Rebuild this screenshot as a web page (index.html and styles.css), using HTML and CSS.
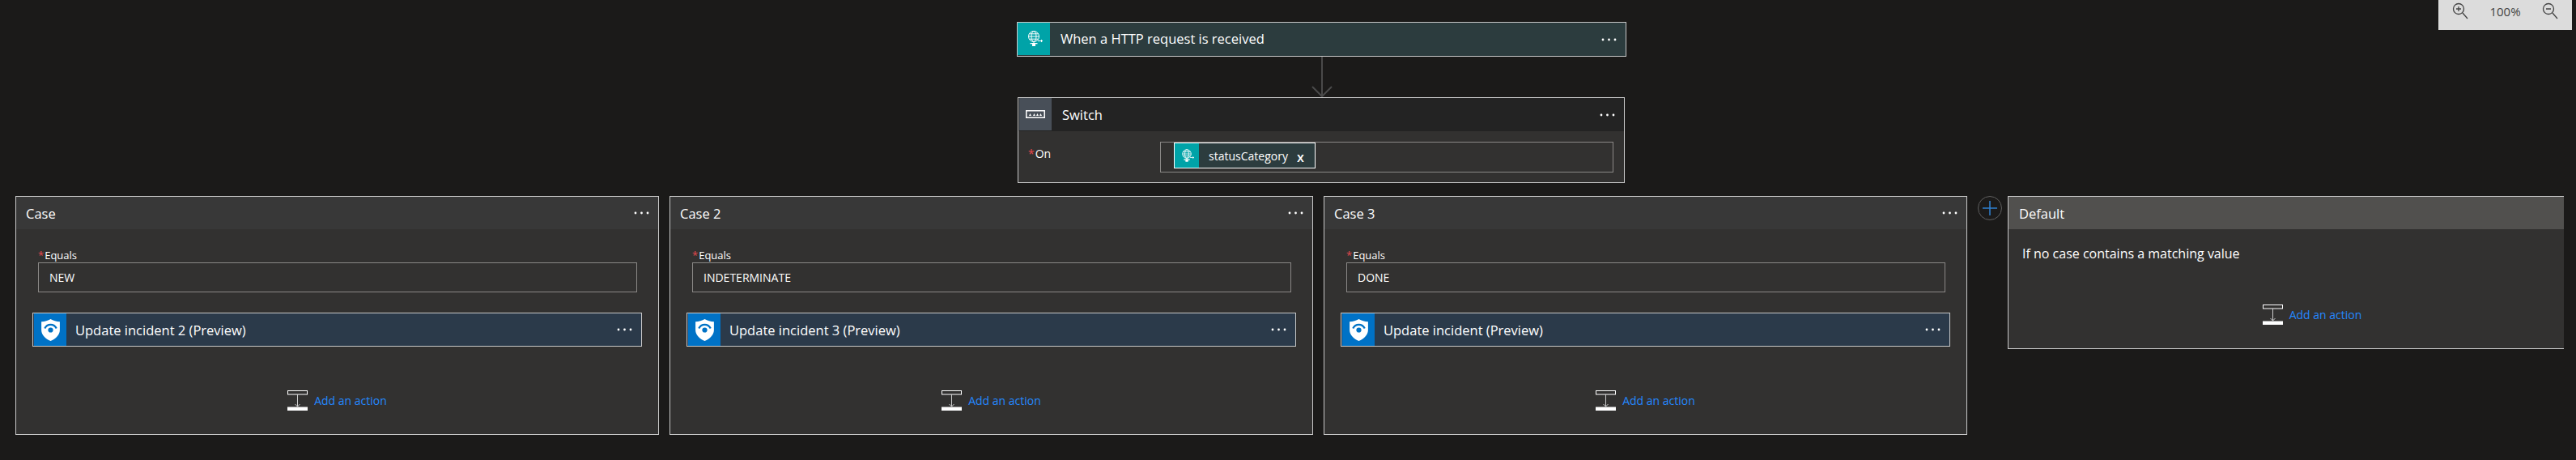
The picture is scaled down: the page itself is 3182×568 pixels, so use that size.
FILE: index.html
```html
<!DOCTYPE html>
<html lang="en">
  <head>
    <meta charset="UTF-8" />
    <title>Logic App Designer</title>
    <link rel="stylesheet" href="styles.css">
  </head>
  <body>
    <svg class="defs" width="0" height="0">
      <symbol id="globe" viewBox="0 0 22 20">
        <g fill="none" stroke="#fff" stroke-width="1">
          <circle cx="11" cy="7" r="6.500" />
          <ellipse cx="11" cy="7" rx="3" ry="6.500" />
          <path d="M4.500 7h13M5.500 3.800h11M5.500 10.200h11M11 13.500v2" />
        </g>
        <path d="M6.500 15h9v1.300h-9zM9 16.300h4V19H9z" fill="#fff" />
        <path d="M16 12.500h5.500M20 11l1.700 1.500-1.700 1.500" fill="none" stroke="#fff" stroke-width="1" />
      </symbol>
      <symbol id="shield" viewBox="0 0 24 28">
        <path d="M12 1 C15 3 19 4 23 4 V14 C23 20 18 24.500 12 27 C6 24.500 1 20 1 14 V4 C5 4 9 3 12 1Z" fill="#fff" />
        <path d="M5 12 C8 6 16 6 19 12" fill="none" stroke="#0072c6" stroke-width="2.200" />
        <circle cx="12" cy="14" r="3" fill="#0072c6" />
      </symbol>
      <symbol id="more" viewBox="0 0 19 4">
        <circle cx="2" cy="2" r="1.400" fill="#fff" />
        <circle cx="9.500" cy="2" r="1.400" fill="#fff" />
        <circle cx="17" cy="2" r="1.400" fill="#fff" />
      </symbol>
      <symbol id="add" viewBox="0 0 25 25">
        <rect x="0.500" y="0.500" width="24" height="4.500" fill="none" stroke="#fff" />
        <path d="M12.500 5v15M9.500 17l3 3 3-3" fill="none" stroke="#ccc" stroke-width="1" />
        <rect x="0" y="20.500" width="25" height="4.500" fill="#fff" />
      </symbol>
    </svg>

    <div class="zoom-panel">
      <svg class="zoom-icon" viewBox="0 0 20 22">
        <circle cx="8" cy="8" r="6.500" fill="none" stroke="#444" stroke-width="1.300" />
        <path d="M13 13l6 7M5 8h6M8 5v6" fill="none" stroke="#444" stroke-width="1.300" />
      </svg>
      <span>100%</span>
      <svg class="zoom-icon" viewBox="0 0 20 22">
        <circle cx="8" cy="8" r="6.500" fill="none" stroke="#444" stroke-width="1.300" />
        <path d="M13 13l6 7M5 8h6" fill="none" stroke="#444" stroke-width="1.300" />
      </svg>
    </div>

    <div class="designer">
      <div class="trigger">
        <div class="icon-box teal"><svg class="globe-icon"><use href="#globe" /></svg></div>
        <div class="title">When a HTTP request is received</div>
        <svg class="more"><use href="#more" /></svg>
      </div>

      <svg class="arrow" viewBox="0 0 26 50">
        <path d="M13 0v48M1 37l12 12 12-12" fill="none" stroke="#4a4a4a" stroke-width="2" />
      </svg>

      <div class="switch">
        <div class="switch-head">
          <div class="icon-box slate">
            <svg class="switch-icon" viewBox="0 0 24 10">
              <rect x="0.750" y="0.750" width="22.500" height="8.500" fill="none" stroke="#fff" stroke-width="1.500" />
              <path d="M4 7l1.500-3L7 7zM9 7l1.500-3L12 7zM13 7l1.500-3L16 7zM17 7l1.500-3L20 7z" fill="#fff" />
            </svg>
          </div>
          <div class="title">Switch</div>
          <svg class="more"><use href="#more" /></svg>
        </div>
        <div class="switch-body">
          <div class="on-label"><span class="req">*</span>On</div>
          <div class="on-input">
            <div class="token">
              <div class="token-icon"><svg class="token-globe"><use href="#globe" /></svg></div>
              <span class="token-text">statusCategory</span>
              <span class="token-x">x</span>
            </div>
          </div>
        </div>
      </div>

      <div class="cases">
        <div class="case">
          <div class="case-head"><span>Case</span><svg class="more"><use href="#more" /></svg></div>
          <div class="case-body">
            <div class="equals"><span class="req">*</span>Equals</div>
            <div class="equals-input">NEW</div>
            <div class="action">
              <div class="icon-box blue"><svg class="shield-icon"><use href="#shield" /></svg></div>
              <div class="title">Update incident 2 (Preview)</div>
              <svg class="more"><use href="#more" /></svg>
            </div>
            <div class="add-action"><svg class="add-icon"><use href="#add" /></svg><a href="#">Add an action</a></div>
          </div>
        </div>

        <div class="case">
          <div class="case-head"><span>Case 2</span><svg class="more"><use href="#more" /></svg></div>
          <div class="case-body">
            <div class="equals"><span class="req">*</span>Equals</div>
            <div class="equals-input">INDETERMINATE</div>
            <div class="action">
              <div class="icon-box blue"><svg class="shield-icon"><use href="#shield" /></svg></div>
              <div class="title">Update incident 3 (Preview)</div>
              <svg class="more"><use href="#more" /></svg>
            </div>
            <div class="add-action"><svg class="add-icon"><use href="#add" /></svg><a href="#">Add an action</a></div>
          </div>
        </div>

        <div class="case">
          <div class="case-head"><span>Case 3</span><svg class="more"><use href="#more" /></svg></div>
          <div class="case-body">
            <div class="equals"><span class="req">*</span>Equals</div>
            <div class="equals-input">DONE</div>
            <div class="action">
              <div class="icon-box blue"><svg class="shield-icon"><use href="#shield" /></svg></div>
              <div class="title">Update incident (Preview)</div>
              <svg class="more"><use href="#more" /></svg>
            </div>
            <div class="add-action"><svg class="add-icon"><use href="#add" /></svg><a href="#">Add an action</a></div>
          </div>
        </div>

        <div class="add-case">
          <svg viewBox="0 0 30 30">
            <circle cx="15" cy="15" r="14.500" fill="#1b1a19" stroke="#5f5f5f" />
            <path d="M15 6v18M6 15h18" fill="none" stroke="#2f80d0" stroke-width="1.500" />
          </svg>
        </div>

        <div class="case-default">
          <div class="default-inner">
            <div class="case-head light"><span>Default</span></div>
            <div class="default-body">
              <p>If no case contains a matching value</p>
              <div class="add-action"><svg class="add-icon"><use href="#add" /></svg><a href="#">Add an action</a></div>
            </div>
          </div>
        </div>
      </div>
    </div>
  </body>
</html>
```

FILE: styles.css
```css
* {
  box-sizing: border-box;
}

body {
  margin: 0;
  height: 568px;
  overflow: hidden;
  position: relative;
  background-color: #1b1a19;
  color: #fff;
  font-family: "Open Sans", "Noto Sans", sans-serif;
}

.defs {
  display: block;
  height: 0;
}

.zoom-panel {
  position: absolute;
  top: 0;
  left: 3012px;
  width: 165px;
  height: 37px;
  background-color: #dcdcdc;
  color: #444;
  font-size: 15px;
  display: flex;
  justify-content: space-between;
  padding: 0 17px 10px;
  align-items: center;
}

.zoom-icon {
  width: 20px;
  height: 22px;
}

.designer {
  padding-top: 27px;
}

.icon-box {
  width: 40px;
  height: 40px;
  flex: none;
  display: flex;
  align-items: center;
  justify-content: center;
}

.teal {
  background-color: #00a3a8;
}

.slate {
  background-color: #484f58;
}

.blue {
  background-color: #0072c6;
}

.title {
  flex: 1;
  font-size: 16.5px;
  padding-left: 13px;
}

.more {
  width: 19px;
  height: 4px;
  flex: none;
  margin-right: 11px;
}

/* top of the flow */
.trigger {
  width: 753px;
  height: 43px;
  margin-left: 1256px;
  display: flex;
  align-items: flex-start;
  background-color: #2c3c3e;
  border: 1px solid #c8c8c8;
}

.trigger .title,
.switch-head .title,
.action .title {
  align-self: center;
}

.trigger .title {
  padding-bottom: 2px;
}

.trigger .more,
.switch-head .more,
.action .more {
  align-self: center;
}

.globe-icon {
  width: 22px;
  height: 20px;
}

.arrow {
  display: block;
  width: 26px;
  height: 50px;
  margin-left: 1620px;
}

.switch {
  width: 750px;
  height: 106px;
  margin-left: 1257px;
  background-color: #323130;
  border: 1px solid #c8c8c8;
}

.switch-head {
  height: 41px;
  background-color: #232323;
  display: flex;
  align-items: flex-start;
}

.switch-head .icon-box {
  margin-left: 1px;
}

.switch-icon {
  width: 24px;
  height: 10px;
}

.switch-body {
  display: flex;
  padding: 13px 13px 0 12px;
}

.on-label {
  width: 163px;
  font-size: 14px;
  padding-top: 5px;
}

.req {
  color: #e5484d;
  margin-right: 1px;
}

.on-input {
  flex: 1;
  height: 38px;
  border: 1px solid #8a8886;
  padding: 0 0 0 16px;
}

.token {
  width: 175px;
  height: 32px;
  display: flex;
  align-items: center;
  background-color: #2c3c3e;
  border: 1px solid #fff;
}

.token-icon {
  width: 30px;
  height: 30px;
  background-color: #00a3a8;
  display: flex;
  align-items: center;
  justify-content: center;
}

.token-globe {
  width: 18px;
  height: 17px;
}

.token-text {
  font-size: 14px;
  margin-left: 12px;
}

.token-x {
  font-size: 16px;
  font-weight: 600;
  margin-left: 11px;
  padding-top: 3px;
  line-height: 1;
}

/* case columns */
.cases {
  display: flex;
  align-items: flex-start;
  padding-left: 19px;
  margin-top: 16px;
  gap: 13px;
}

.case {
  width: 795px;
  height: 295px;
  flex: none;
  background-color: #323130;
  border: 1px solid #c8c8c8;
}

.case-head {
  height: 40px;
  background-color: #383838;
  display: flex;
  align-items: center;
  justify-content: space-between;
  font-size: 16.5px;
  padding-left: 12px;
}

.case-head .more {
  margin-right: 11px;
}

.case-body {
  padding: 23px 20px 0 20px;
}

.equals {
  font-size: 13px;
  padding-left: 7px;
  height: 18px;
  line-height: 18px;
}

.equals-input {
  margin-left: 7px;
  margin-right: 6px;
  height: 37px;
  border: 1px solid #8a8886;
  font-size: 14px;
  line-height: 35px;
  padding-left: 13px;
}

.action {
  height: 42px;
  margin-top: 25px;
  display: flex;
  align-items: flex-start;
  background-color: #2b3a4a;
  border: 1px solid #c8c8c8;
}

.action .icon-box {
  margin-left: 1px;
}

.action .title {
  padding-left: 11px;
}

.shield-icon {
  width: 25px;
  height: 29px;
}

.add-action {
  display: flex;
  align-items: center;
  justify-content: center;
  gap: 8px;
  margin-top: 54px;
  font-size: 14px;
}

.add-action a {
  color: #2488ff;
  text-decoration: none;
}

.add-icon {
  width: 25px;
  height: 25px;
}

.add-case {
  width: 30px;
  height: 30px;
  flex: none;
  margin-right: -6px;
}

.add-case svg {
  display: block;
  width: 30px;
  height: 30px;
}

.case-default {
  width: 687px;
  height: 189px;
  flex: none;
  overflow: hidden;
  background-color: #323130;
  border: 1px solid #c8c8c8;
  border-right: none;
}

.default-inner {
  width: 750px;
}

.light {
  background-color: #51504e;
  padding-left: 13px;
}

.default-body {
  font-size: 16px;
}

.default-body p {
  margin: 0;
  padding: 19px 0 0 17px;
}

.default-body .add-action {
  margin-top: 52px;
}
```
